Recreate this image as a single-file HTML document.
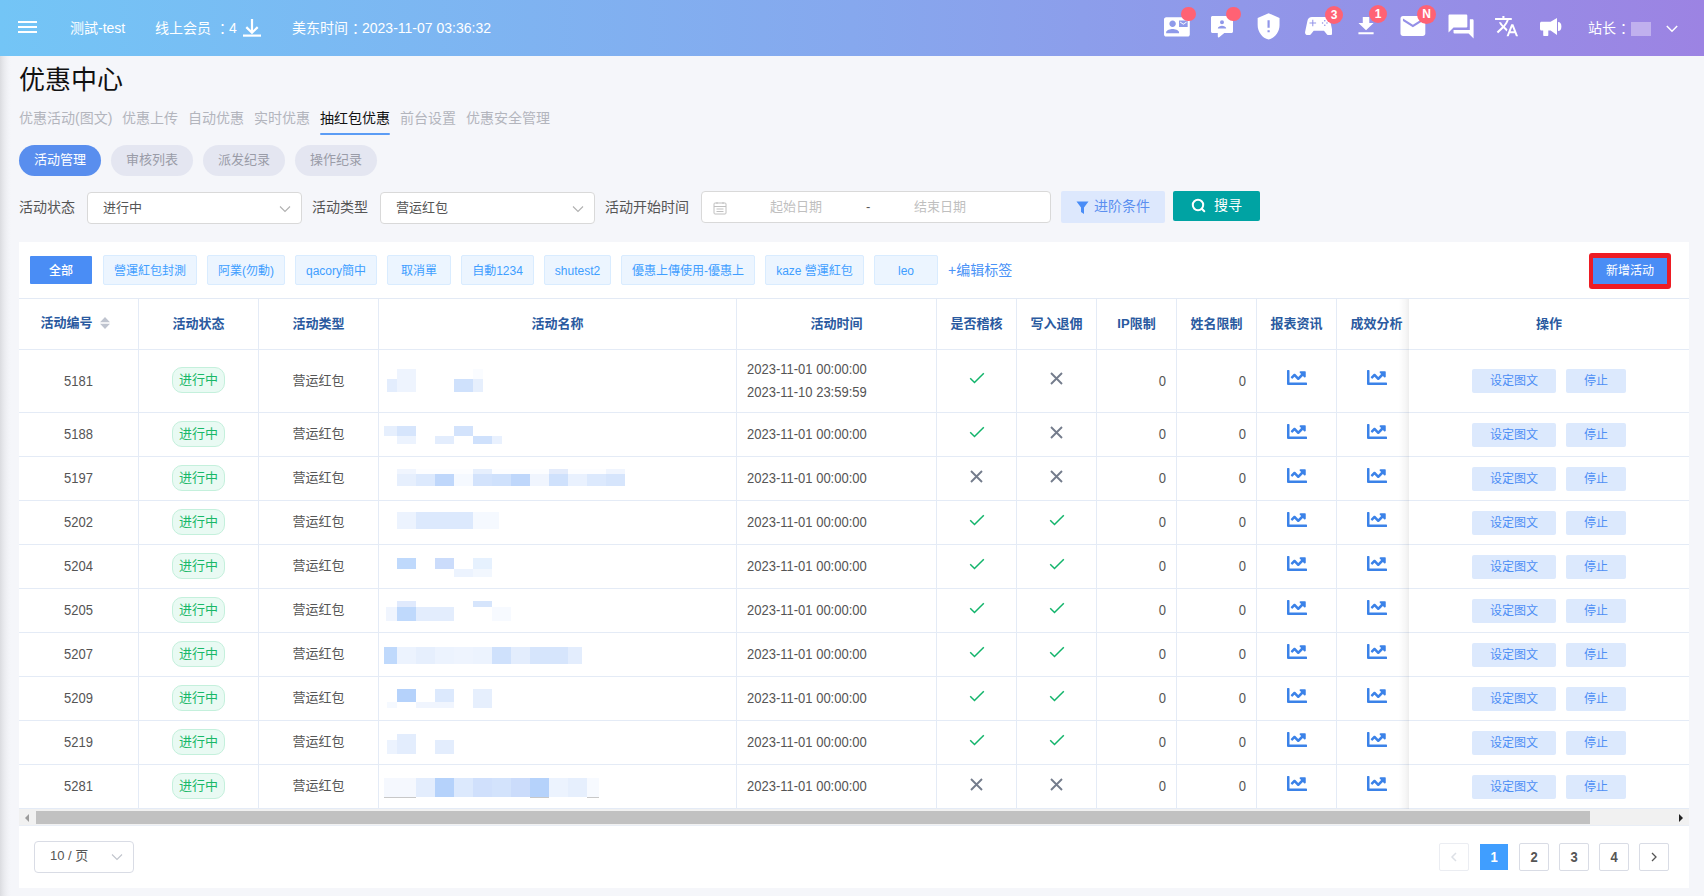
<!DOCTYPE html>
<html lang="zh-CN">
<head>
<meta charset="utf-8">
<title>优惠中心</title>
<style>
*{box-sizing:border-box;margin:0;padding:0}
html,body{width:1704px;height:896px;overflow:hidden}
body{background:#f5f6fa;font-family:"Liberation Sans","Noto Sans CJK SC",sans-serif;font-size:14px;color:#555;position:relative}
.abs{position:absolute}
#hdr{position:absolute;left:0;top:0;width:1704px;height:56px;background:linear-gradient(90deg,#73c5f6 0%,#86a8ee 50%,#9c83e3 100%);color:#fff}
#hdr .t{position:absolute;top:0;height:56px;line-height:56px;font-size:14px;white-space:nowrap;color:#fff}
#lshadow{position:absolute;left:0;top:56px;width:11px;height:840px;background:linear-gradient(90deg,#dbdce0 0%,#e3e4e8 20%,#eaebef 40%,#eff0f4 60%,#f3f4f8 80%,#f5f6fa 100%)}
h1{position:absolute;left:19px;top:62px;font-size:26px;line-height:36px;font-weight:400;color:#111}
.tab{position:absolute;top:108px;height:20px;line-height:20px;font-size:14px;color:#b3b5bd;white-space:nowrap}
.tab.on{color:#111}
.pill{position:absolute;top:145px;width:82px;height:31px;line-height:30px;border-radius:16px;background:#e4e6f1;color:#9a9ca8;text-align:center;font-size:13px}
.pill.on{background:#598eee;color:#fff}
.lbl{position:absolute;top:192px;height:32px;line-height:31px;font-size:14px;color:#555;white-space:nowrap}
.sel{position:absolute;top:192px;height:32px;border:1px solid #d9d9d9;border-radius:4px;background:#fff;line-height:30px;padding-left:15px;font-size:13px;color:#555}
#card{position:absolute;left:19px;top:242px;width:1670px;height:646px;background:#fff}

#tags{position:absolute;left:0;top:0;width:1670px;height:56px}
#tags span{position:absolute;white-space:nowrap}
.all{top:14px;width:62px;height:28px;line-height:30px;background:#4a8df5;color:#fff;font-size:12px;font-weight:500;text-align:center;border-radius:1px}
.tag{top:13px;height:30px;line-height:30px;border:1px solid #d9ecff;background:#ecf5ff;color:#409eff;font-size:12px;text-align:center;border-radius:2px}
.edit{top:13px;height:30px;line-height:30px;color:#4a93f7;font-size:14px}
.redbox{left:1569.700px;top:11.400px;width:82.700px;height:36.100px;background:#ed1c24;border-radius:3px}
.newbtn{left:4.700px;top:5.100px;width:73.200px;height:26px;line-height:27px;background:#4a8df5;color:#fff;font-size:12px;text-align:center}
#tw{position:absolute;left:0;top:56px;width:1390px;height:511px;overflow:hidden;border-top:1px solid #e3eaf5}
#tw table{border-collapse:separate;border-spacing:0;table-layout:fixed;width:1478px}
#tw th,#tw td{border-right:1px solid #e4ebf6;border-bottom:1px solid #e4ebf6;text-align:center;vertical-align:middle;font-size:13px;color:#555;padding:0;white-space:nowrap}
#tw th{height:51px;font-weight:700;color:#2a5aa0;font-size:13px}
#tw td.tm{text-align:left;padding-left:10px;line-height:23px}
#tw td.num{text-align:right;padding-right:10px}
.sortwrap{position:relative;display:inline-block;padding-right:17px;top:-3px;left:-3.500px}
.sort{position:absolute;right:0;top:5px}
.st{display:inline-block;width:53px;height:26px;line-height:23px;border:1px solid #c4f0dc;background:#e9faf3;color:#19b868;border-radius:10px;font-size:13px;position:relative;top:-1px}
.ic{display:inline-block;vertical-align:middle}
.ic.ck{position:relative;top:-4px}
.ic.cx{position:relative;top:-3.400px}
.ic.ch{position:relative;top:-4px}
#fx{position:absolute;left:1390px;top:56px;width:280px;height:511px;background:#fff;border-top:1px solid #e3eaf5}
#fx:before{content:"";position:absolute;left:-11px;top:0;width:11px;height:511px;background:linear-gradient(90deg,rgba(0,0,0,0) 0%,rgba(0,0,0,.012) 30%,rgba(0,0,0,.035) 70%,rgba(0,0,0,.065) 100%)}
.fh{height:51px;line-height:49px;border-bottom:1px solid #e4ebf6;text-align:center;font-weight:700;color:#2a5aa0;font-size:13px}
.fr{position:relative;border-bottom:1px solid #e4ebf6}
.fr span{position:absolute;top:50%;margin-top:-12px;height:24px;line-height:24px;background:#dce9fd;color:#4d8ef5;font-size:12px;text-align:center;border-radius:2px}
.b1{left:63px;width:84px}
.b2{left:157px;width:60px}
#mos i{position:absolute;display:block}
#sb{position:absolute;left:0;top:567px;width:1670px;height:17px;background:#f1f1f1;border-bottom:1px solid #e9eef6}
#sb .thumb{position:absolute;left:17px;top:2px;width:1554px;height:13px;background:#c1c1c1}
#sb .al{position:absolute;left:6px;top:4.500px}
#sb .ar{position:absolute;left:1659.500px;top:4.500px}
#ps{position:absolute;left:15px;top:599px;width:100px;height:32px;border:1px solid #d9dce5;border-radius:4px;font-size:13px;color:#555;line-height:28px;padding-left:15px}
#ps svg{position:absolute;left:76px;top:9px}
#pg{position:absolute;left:0;top:601px}
.pb{position:absolute;top:0;width:30px;height:28px;line-height:26px;border:1px solid #d9dce5;border-radius:2px;text-align:center;font-weight:700;font-size:13px;color:#555;background:#fff}
.pb.on{background:#409eff;color:#fff;border-color:#409eff;width:28px;height:26px;top:1px;line-height:24px;border-radius:0}
.pb.dis{border-color:#ebedf2}
.pb svg{position:relative;top:1px}
.pb b{display:inline-block;position:relative;top:1px;transform:scaleY(1.140);transform-origin:50% 68%;font-weight:700}

.dot{position:absolute;width:14.500px;height:14.500px;border-radius:50%;background:#ff6274}
.bdg{position:absolute;width:18px;height:18px;border-radius:50%;background:#ff6274;color:#fff;font-style:normal;font-weight:700;font-size:12px;line-height:18px;text-align:center}
.jc{position:relative;left:4px}
.cj{position:relative;top:-2px}
#tw th span.h{position:relative;top:-2px}
.sy{display:inline-block;transform:scaleY(1.1);transform-origin:0 11.800px;line-height:15px}
#tw td.tm .sy{display:block;line-height:23px;transform-origin:0 15.800px}
</style>
</head>
<body>
<div id="hdr">

  <svg class="abs" style="left:18px;top:21px" width="19" height="12" viewBox="0 0 19 12"><path d="M0 0h19v2H0zM0 5h19v2H0zM0 10h19v2H0z" fill="#fff"/></svg>
  <svg class="abs" style="left:243px;top:19px" width="18" height="18" viewBox="0 0 18 18"><path d="M9 0v13M3.300 8.100L9 13.800l5.700-5.700" fill="none" stroke="#fff" stroke-width="2.200"/><path d="M0 15.500h18v2.200H0z" fill="#fff"/></svg>
  <svg class="abs" style="left:1164.100px;top:13.800px" width="25.800" height="25.800" viewBox="0 0 24 24"><path fill="#fff" d="M21 8V7l-3 2-3-2v1l3 2 3-2zm1-5H2C.9 3 0 3.900 0 5v14c0 1.100.9 2 2 2h20c1.100 0 1.990-.9 1.990-2L24 5c0-1.100-.9-2-2-2zM8 6c1.660 0 3 1.340 3 3s-1.340 3-3 3-3-1.340-3-3 1.340-3 3-3zm6 12H2v-1c0-2 4-3.100 6-3.100s6 1.100 6 3.100v1zm8-6h-8V6h8v6z"/></svg>
  <i class="dot" style="left:1181px;top:6.700px"></i>
  <svg class="abs" style="left:1211px;top:16px" width="22" height="21.500" viewBox="0 0 22 21.500"><path fill="#fff" d="M1.500 0h19c.8 0 1.500.7 1.500 1.500v14c0 .8-.7 1.500-1.500 1.500H13.300L8.200 21.300c-.6.500-1.400.1-1.400-.7V17H1.500C.7 17 0 16.300 0 15.500v-14C0 .7.700 0 1.500 0zM11 4.200a2 2 0 100 4 2 2 0 000-4zM6.800 12.600h8.400c0-1.900-2.600-2.800-4.200-2.800s-4.200.9-4.200 2.800z"/></svg>
  <i class="dot" style="left:1226px;top:6.700px"></i>
  <svg class="abs" style="left:1253.750px;top:11.500px" width="29.200" height="28.700" viewBox="0 0 24 24" preserveAspectRatio="none"><path fill="#fff" d="M12 1L3 5v6c0 5.550 3.840 10.740 9 12 5.160-1.260 9-6.450 9-12V5l-9-4zm.9 16h-1.800v-1.800h1.800V17zm0-3.800h-1.800V7h1.800v6.200z"/></svg>
  <svg class="abs" style="left:1304.700px;top:16.900px" width="27.700" height="18.300" viewBox="0 0 27.700 18.300"><path fill="#fff" fill-rule="evenodd" d="M7 0H20.700C23 0 24.900 1.600 25.300 3.900L27.600 15C27.900 16.800 26.600 18.300 24.900 18.300H24C23.200 18.300 22.500 18 22 17.400L19 13.700H8.700L5.700 17.400C5.200 18 4.500 18.300 3.700 18.300H2.800C1.100 18.300-.2 16.800.1 15L2.400 3.900C2.800 1.600 4.700 0 7 0ZM7.300 2.700V5.500H4.500V6.500H7.300V9.300H8.300V6.500H11.100V5.500H8.300V2.700ZM19.800 3a.8.800 0 100 1.600.8.800 0 000-1.600ZM19.800 7.400a.8.800 0 100 1.600.8.800 0 000-1.600ZM17.600 5.200a.8.800 0 100 1.600.8.800 0 000-1.600ZM22 5.200a.8.800 0 100 1.600.8.800 0 000-1.600Z"/></svg>
  <i class="bdg" style="left:1325px;top:6px">3</i>
  <svg class="abs" style="left:1353.400px;top:13.860px" width="26.060" height="24.300" viewBox="0 0 24 24" preserveAspectRatio="none"><path fill="#fff" d="M19 9h-4V3H9v6H5l7 7 7-7zM5 18v2h14v-2H5z"/></svg>
  <i class="bdg" style="left:1369px;top:5px">1</i>
  <svg class="abs" style="left:1397.500px;top:11px" width="29.800" height="30" viewBox="0 0 24 24"><path fill="#fff" d="M20 4H4c-1.100 0-1.990.9-1.990 2L2 18c0 1.100.9 2 2 2h16c1.100 0 2-.9 2-2V6c0-1.100-.9-2-2-2zm0 4l-8 5-8-5V6l8 5 8-5v2z"/></svg>
  <i class="bdg" style="left:1417px;top:5.300px;width:19px;height:19px;line-height:19px">N</i>
  <svg class="abs" style="left:1445.900px;top:12px" width="30.100" height="28.800" viewBox="0 0 24 24" preserveAspectRatio="none"><path fill="#fff" d="M21 6h-2v9H6v2c0 .55.450 1 1 1h11l4 4V7c0-.55-.45-1-1-1zm-4 6V3c0-.55-.45-1-1-1H3c-.55 0-1 .45-1 1v14l4-4h10c.55 0 1-.45 1-1z"/></svg>
  <svg class="abs" style="left:1493.900px;top:13.900px" width="25.100" height="24.400" viewBox="0 0 24 24" preserveAspectRatio="none"><path fill="#fff" d="M12.870 15.070l-2.540-2.510.03-.03c1.740-1.940 2.980-4.170 3.710-6.530H17V4h-7V2H8v2H1v1.990h11.170C11.500 7.920 10.440 9.750 9 11.350 8.070 10.320 7.300 9.190 6.690 8h-2c.73 1.630 1.730 3.170 2.980 4.560l-5.090 5.020L4 19l5-5 3.110 3.110.76-2.040zM18.500 10h-2L12 22h2l1.120-3h4.750L21 22h2l-4.500-12zm-2.620 7l1.620-4.330L19.120 17h-3.240z"/></svg>
  <svg class="abs" style="left:1540px;top:18px" width="22" height="18" viewBox="0 0 22 18"><path fill="#fff" d="M1.500 3.700h9.100L17 0v17l-6.400-4.600H8.300V17c0 .6-.4 1-1 1H4.200c-.6 0-1-.4-1-1v-4.600H1.500C.7 12.400 0 11.700 0 10.900V5.200c0-.8.700-1.500 1.500-1.500zM18 4a3.400 4.500 0 010 9z"/></svg>
  <i class="abs" style="left:1631px;top:22px;width:20px;height:14px;background:#c0b0ee"></i>
  <svg class="abs" style="left:1666px;top:24.500px" width="12" height="8" viewBox="0 0 12 8"><path d="M.8 1l5.200 5.200L11.200 1" fill="none" stroke="#fff" stroke-width="1.500"/></svg>
  <span class="t" style="left:70px">测試-test</span>
  <span class="t" style="left:155px">线上会员 <span class="jc">：</span>4</span>
  <span class="t" style="left:292px">美东时间<span class="jc">：</span>2023-11-07 03:36:32</span>
  <span class="t" style="left:1588px">站长<span class="jc">：</span></span>
</div>
<div id="lshadow"></div>
<h1>优惠中心</h1>

<span class="tab" style="left:19px">优惠活动(图文)</span>
<span class="tab" style="left:122px">优惠上传</span>
<span class="tab" style="left:188px">自动优惠</span>
<span class="tab" style="left:254px">实时优惠</span>
<span class="tab on" style="left:320px">抽红包优惠</span>
<span class="tab" style="left:400px">前台设置</span>
<span class="tab" style="left:466px">优惠安全管理</span>
<div class="abs" style="left:320px;top:133px;width:70px;height:2px;background:#5b9cf5;border-radius:1px"></div>
<div class="pill on" style="left:19px">活动管理</div>
<div class="pill" style="left:111px">审核列表</div>
<div class="pill" style="left:203px">派发纪录</div>
<div class="pill" style="left:295px">操作纪录</div>
<span class="lbl" style="left:19px">活动状态</span>
<div class="sel" style="left:87px;width:215px">进行中<svg class="abs" style="right:10px;top:10px" width="12" height="12" viewBox="0 0 12 12"><path d="M1 3.5l5 5 5-5" fill="none" stroke="#b0b0b0" stroke-width="1.1"/></svg></div>
<span class="lbl" style="left:312px">活动类型</span>
<div class="sel" style="left:380px;width:215px">营运红包<svg class="abs" style="right:10px;top:10px" width="12" height="12" viewBox="0 0 12 12"><path d="M1 3.5l5 5 5-5" fill="none" stroke="#b0b0b0" stroke-width="1.1"/></svg></div>
<span class="lbl" style="left:605px">活动开始时间</span>
<div class="sel" id="range" style="left:701px;top:191px;width:350px;padding:0">
  <svg class="abs" style="left:11px;top:9px" width="14" height="14" viewBox="0 0 14 14"><rect x="1" y="2" width="12" height="11" rx="1" fill="none" stroke="#c0c0c0" stroke-width="1"/><path d="M1 5.5h12M4 1v2M10 1v2M3.5 8h7M3.500 10.500h7" stroke="#c0c0c0" stroke-width="1" fill="none"/></svg>
  <span class="abs" style="left:68px;top:0;color:#bfbfbf;font-size:13px">起始日期</span>
  <span class="abs" style="left:164px;top:0;color:#555;font-size:13px">-</span>
  <span class="abs" style="left:212px;top:0;color:#bfbfbf;font-size:13px">结束日期</span>
</div>
<div class="abs" id="adv" style="left:1061px;top:191px;width:104px;height:32px;background:#dde8fd;border-radius:2px;color:#5b8ff0;font-size:14px;line-height:31px;padding-left:33px">进阶条件
  <svg class="abs" style="left:15px;top:10px" width="13" height="14" viewBox="0 0 13 14"><path d="M0.500 0.500h12L8 6.500V13l-3-2V6.500z" fill="#4a8df7"/></svg>
</div>
<div class="abs" id="srch" style="left:1173px;top:191px;width:87px;height:30px;background:#00a3a3;border-radius:2px;color:#fff;font-size:14px;line-height:29px;padding-left:41px">搜寻
  <svg class="abs" style="left:18px;top:7px" width="15" height="15" viewBox="0 0 15 15"><circle cx="7" cy="7" r="5.200" fill="none" stroke="#fff" stroke-width="2"/><path d="M10.800 10.800l2.500 2.500" stroke="#fff" stroke-width="2" stroke-linecap="round"/></svg>
</div>
<div id="card"><!--CARD-->
<div id="tags">
<span class="all" style="left:11px">全部</span>
<span class="tag" style="left:84px;width:94px">營運紅包封測</span>
<span class="tag" style="left:188px;width:78px">阿業(勿動)</span>
<span class="tag" style="left:276px;width:82px">qacory簡中</span>
<span class="tag" style="left:368px;width:64px">取消單</span>
<span class="tag" style="left:442px;width:73px">自動1234</span>
<span class="tag" style="left:525px;width:67px">shutest2</span>
<span class="tag" style="left:602px;width:134px">優惠上傳使用-優惠上</span>
<span class="tag" style="left:746px;width:99px">kaze 營運紅包</span>
<span class="tag" style="left:855px;width:64px">leo</span>
<span class="edit" style="left:929px">+编辑标签</span>
<span class="redbox"><span class="newbtn">新增活动</span></span>
</div>
<div id="tw"><table><colgroup>
<col style="width:120px">
<col style="width:120px">
<col style="width:120px">
<col style="width:358px">
<col style="width:200px">
<col style="width:80px">
<col style="width:80px">
<col style="width:80px">
<col style="width:80px">
<col style="width:80px">
<col style="width:80px">
<col style="width:80px">
</colgroup><thead><tr>
<th><span class="sortwrap">活动编号<svg class="sort" width="10" height="12" viewBox="0 0 10 12"><path d="M5 0l5 5.300H0zM5 12L0 6.700h10z" fill="#bfc4cf"/></svg></span></th>
<th><span class="h">活动状态</span></th>
<th><span class="h">活动类型</span></th>
<th><span class="h">活动名称</span></th>
<th><span class="h">活动时间</span></th>
<th><span class="h">是否稽核</span></th>
<th><span class="h">写入退佣</span></th>
<th><span class="h">IP限制</span></th>
<th><span class="h">姓名限制</span></th>
<th><span class="h">报表资讯</span></th>
<th><span class="h">成效分析</span></th>
<th><span class="h"></span></th>
</tr></thead><tbody>
<tr style="height:63px"><td><span class="sy">5181</span></td><td><span class="st">进行中</span></td><td><span class="cj">营运红包</span></td><td></td><td class="tm"><span class="sy">2023-11-01 00:00:00</span><span class="sy">2023-11-10 23:59:59</span></td><td><svg class="ic ck" width="16" height="12" viewBox="0 0 16 12"><path d="M1.200 6.300l4.300 4.200L14.800 1.300" fill="none" stroke="#12b46b" stroke-width="1.500"/></svg></td><td><svg class="ic cx" width="13" height="13" viewBox="0 0 13 13"><path d="M1 1l11 11M12 1L1 12" fill="none" stroke="#747c8c" stroke-width="1.900"/></svg></td><td class="num"><span class="sy">0</span></td><td class="num"><span class="sy">0</span></td><td><svg class="ic ch" width="20" height="15" viewBox="0 0 512 384"><path fill="#3b82e8" d="M496 320H64V16c0-8.840-7.160-16-16-16H16C7.160 0 0 7.160 0 16v336c0 17.670 14.330 32 32 32h464c8.840 0 16-7.160 16-16v-32c0-8.840-7.160-16-16-16zM464 32H345.940c-21.380 0-32.090 25.850-16.970 40.970l32.400 32.400L288 178.750l-73.370-73.370c-12.500-12.500-32.760-12.500-45.250 0l-68.690 68.690c-6.250 6.250-6.250 16.380 0 22.630l22.620 22.620c6.250 6.250 16.380 6.250 22.630 0L192 173.250l73.370 73.370c12.500 12.500 32.760 12.500 45.250 0l96-96 32.400 32.400c15.120 15.120 40.970 4.410 40.970-16.970V48c.010-8.840-7.150-16-15.990-16z"/></svg></td><td><svg class="ic ch" width="20" height="15" viewBox="0 0 512 384"><path fill="#3b82e8" d="M496 320H64V16c0-8.840-7.160-16-16-16H16C7.160 0 0 7.160 0 16v336c0 17.670 14.330 32 32 32h464c8.840 0 16-7.160 16-16v-32c0-8.840-7.160-16-16-16zM464 32H345.940c-21.380 0-32.090 25.850-16.970 40.970l32.400 32.400L288 178.750l-73.370-73.370c-12.500-12.500-32.760-12.500-45.250 0l-68.690 68.690c-6.250 6.250-6.250 16.380 0 22.630l22.620 22.620c6.250 6.250 16.380 6.250 22.630 0L192 173.250l73.370 73.370c12.500 12.500 32.760 12.500 45.250 0l96-96 32.400 32.400c15.120 15.120 40.970 4.410 40.970-16.970V48c.010-8.840-7.150-16-15.990-16z"/></svg></td><td></td></tr>
<tr style="height:44px"><td><span class="sy">5188</span></td><td><span class="st">进行中</span></td><td><span class="cj">营运红包</span></td><td></td><td class="tm"><span class="sy">2023-11-01 00:00:00</span></td><td><svg class="ic ck" width="16" height="12" viewBox="0 0 16 12"><path d="M1.200 6.300l4.300 4.200L14.800 1.300" fill="none" stroke="#12b46b" stroke-width="1.500"/></svg></td><td><svg class="ic cx" width="13" height="13" viewBox="0 0 13 13"><path d="M1 1l11 11M12 1L1 12" fill="none" stroke="#747c8c" stroke-width="1.900"/></svg></td><td class="num"><span class="sy">0</span></td><td class="num"><span class="sy">0</span></td><td><svg class="ic ch" width="20" height="15" viewBox="0 0 512 384"><path fill="#3b82e8" d="M496 320H64V16c0-8.840-7.160-16-16-16H16C7.160 0 0 7.160 0 16v336c0 17.670 14.330 32 32 32h464c8.840 0 16-7.160 16-16v-32c0-8.840-7.160-16-16-16zM464 32H345.940c-21.380 0-32.090 25.850-16.970 40.970l32.400 32.400L288 178.750l-73.370-73.370c-12.500-12.500-32.760-12.500-45.250 0l-68.690 68.690c-6.250 6.250-6.250 16.380 0 22.630l22.620 22.620c6.250 6.250 16.380 6.250 22.630 0L192 173.250l73.370 73.370c12.500 12.500 32.760 12.500 45.250 0l96-96 32.400 32.400c15.120 15.120 40.970 4.410 40.970-16.970V48c.010-8.840-7.150-16-15.990-16z"/></svg></td><td><svg class="ic ch" width="20" height="15" viewBox="0 0 512 384"><path fill="#3b82e8" d="M496 320H64V16c0-8.840-7.160-16-16-16H16C7.160 0 0 7.160 0 16v336c0 17.670 14.330 32 32 32h464c8.840 0 16-7.160 16-16v-32c0-8.840-7.160-16-16-16zM464 32H345.940c-21.380 0-32.090 25.850-16.970 40.970l32.400 32.400L288 178.750l-73.370-73.370c-12.500-12.500-32.760-12.500-45.250 0l-68.690 68.690c-6.250 6.250-6.250 16.380 0 22.630l22.620 22.620c6.250 6.250 16.380 6.250 22.630 0L192 173.250l73.370 73.370c12.500 12.500 32.760 12.500 45.250 0l96-96 32.400 32.400c15.120 15.120 40.970 4.410 40.970-16.970V48c.010-8.840-7.150-16-15.990-16z"/></svg></td><td></td></tr>
<tr style="height:44px"><td><span class="sy">5197</span></td><td><span class="st">进行中</span></td><td><span class="cj">营运红包</span></td><td></td><td class="tm"><span class="sy">2023-11-01 00:00:00</span></td><td><svg class="ic cx" width="13" height="13" viewBox="0 0 13 13"><path d="M1 1l11 11M12 1L1 12" fill="none" stroke="#747c8c" stroke-width="1.900"/></svg></td><td><svg class="ic cx" width="13" height="13" viewBox="0 0 13 13"><path d="M1 1l11 11M12 1L1 12" fill="none" stroke="#747c8c" stroke-width="1.900"/></svg></td><td class="num"><span class="sy">0</span></td><td class="num"><span class="sy">0</span></td><td><svg class="ic ch" width="20" height="15" viewBox="0 0 512 384"><path fill="#3b82e8" d="M496 320H64V16c0-8.840-7.160-16-16-16H16C7.160 0 0 7.160 0 16v336c0 17.670 14.330 32 32 32h464c8.840 0 16-7.160 16-16v-32c0-8.840-7.160-16-16-16zM464 32H345.940c-21.380 0-32.090 25.850-16.970 40.970l32.400 32.400L288 178.750l-73.370-73.370c-12.500-12.500-32.760-12.500-45.250 0l-68.690 68.690c-6.250 6.250-6.250 16.380 0 22.630l22.620 22.620c6.250 6.250 16.380 6.250 22.630 0L192 173.250l73.370 73.370c12.500 12.500 32.760 12.500 45.250 0l96-96 32.400 32.400c15.120 15.120 40.970 4.410 40.970-16.970V48c.010-8.840-7.150-16-15.990-16z"/></svg></td><td><svg class="ic ch" width="20" height="15" viewBox="0 0 512 384"><path fill="#3b82e8" d="M496 320H64V16c0-8.840-7.160-16-16-16H16C7.160 0 0 7.160 0 16v336c0 17.670 14.330 32 32 32h464c8.840 0 16-7.160 16-16v-32c0-8.840-7.160-16-16-16zM464 32H345.940c-21.380 0-32.090 25.850-16.970 40.970l32.400 32.400L288 178.750l-73.370-73.370c-12.500-12.500-32.760-12.500-45.250 0l-68.690 68.690c-6.250 6.250-6.250 16.380 0 22.630l22.620 22.620c6.250 6.250 16.380 6.250 22.630 0L192 173.250l73.370 73.370c12.500 12.500 32.760 12.500 45.250 0l96-96 32.400 32.400c15.120 15.120 40.970 4.410 40.970-16.970V48c.010-8.840-7.150-16-15.990-16z"/></svg></td><td></td></tr>
<tr style="height:44px"><td><span class="sy">5202</span></td><td><span class="st">进行中</span></td><td><span class="cj">营运红包</span></td><td></td><td class="tm"><span class="sy">2023-11-01 00:00:00</span></td><td><svg class="ic ck" width="16" height="12" viewBox="0 0 16 12"><path d="M1.200 6.300l4.300 4.200L14.800 1.300" fill="none" stroke="#12b46b" stroke-width="1.500"/></svg></td><td><svg class="ic ck" width="16" height="12" viewBox="0 0 16 12"><path d="M1.200 6.300l4.300 4.200L14.800 1.300" fill="none" stroke="#12b46b" stroke-width="1.500"/></svg></td><td class="num"><span class="sy">0</span></td><td class="num"><span class="sy">0</span></td><td><svg class="ic ch" width="20" height="15" viewBox="0 0 512 384"><path fill="#3b82e8" d="M496 320H64V16c0-8.840-7.160-16-16-16H16C7.160 0 0 7.160 0 16v336c0 17.670 14.330 32 32 32h464c8.840 0 16-7.160 16-16v-32c0-8.840-7.160-16-16-16zM464 32H345.940c-21.380 0-32.090 25.850-16.970 40.970l32.400 32.400L288 178.750l-73.370-73.370c-12.500-12.500-32.760-12.500-45.250 0l-68.690 68.690c-6.250 6.250-6.250 16.380 0 22.630l22.620 22.620c6.250 6.250 16.380 6.250 22.630 0L192 173.250l73.370 73.370c12.500 12.500 32.760 12.500 45.250 0l96-96 32.400 32.400c15.120 15.120 40.970 4.410 40.970-16.970V48c.010-8.840-7.150-16-15.990-16z"/></svg></td><td><svg class="ic ch" width="20" height="15" viewBox="0 0 512 384"><path fill="#3b82e8" d="M496 320H64V16c0-8.840-7.160-16-16-16H16C7.160 0 0 7.160 0 16v336c0 17.670 14.330 32 32 32h464c8.840 0 16-7.160 16-16v-32c0-8.840-7.160-16-16-16zM464 32H345.940c-21.380 0-32.090 25.850-16.970 40.970l32.400 32.400L288 178.750l-73.370-73.370c-12.500-12.500-32.760-12.500-45.250 0l-68.690 68.690c-6.250 6.250-6.250 16.380 0 22.630l22.620 22.620c6.250 6.250 16.380 6.250 22.630 0L192 173.250l73.370 73.370c12.500 12.500 32.760 12.500 45.250 0l96-96 32.400 32.400c15.120 15.120 40.970 4.410 40.970-16.970V48c.010-8.840-7.150-16-15.990-16z"/></svg></td><td></td></tr>
<tr style="height:44px"><td><span class="sy">5204</span></td><td><span class="st">进行中</span></td><td><span class="cj">营运红包</span></td><td></td><td class="tm"><span class="sy">2023-11-01 00:00:00</span></td><td><svg class="ic ck" width="16" height="12" viewBox="0 0 16 12"><path d="M1.200 6.300l4.300 4.200L14.800 1.300" fill="none" stroke="#12b46b" stroke-width="1.500"/></svg></td><td><svg class="ic ck" width="16" height="12" viewBox="0 0 16 12"><path d="M1.200 6.300l4.300 4.200L14.800 1.300" fill="none" stroke="#12b46b" stroke-width="1.500"/></svg></td><td class="num"><span class="sy">0</span></td><td class="num"><span class="sy">0</span></td><td><svg class="ic ch" width="20" height="15" viewBox="0 0 512 384"><path fill="#3b82e8" d="M496 320H64V16c0-8.840-7.160-16-16-16H16C7.160 0 0 7.160 0 16v336c0 17.670 14.330 32 32 32h464c8.840 0 16-7.160 16-16v-32c0-8.840-7.160-16-16-16zM464 32H345.940c-21.380 0-32.090 25.850-16.970 40.970l32.400 32.400L288 178.750l-73.370-73.370c-12.500-12.500-32.760-12.500-45.250 0l-68.690 68.690c-6.250 6.250-6.250 16.380 0 22.630l22.620 22.620c6.250 6.250 16.380 6.250 22.630 0L192 173.250l73.370 73.370c12.500 12.500 32.760 12.500 45.250 0l96-96 32.400 32.400c15.120 15.120 40.970 4.410 40.970-16.970V48c.010-8.840-7.150-16-15.990-16z"/></svg></td><td><svg class="ic ch" width="20" height="15" viewBox="0 0 512 384"><path fill="#3b82e8" d="M496 320H64V16c0-8.840-7.160-16-16-16H16C7.160 0 0 7.160 0 16v336c0 17.670 14.330 32 32 32h464c8.840 0 16-7.160 16-16v-32c0-8.840-7.160-16-16-16zM464 32H345.940c-21.380 0-32.090 25.850-16.970 40.970l32.400 32.400L288 178.750l-73.370-73.370c-12.500-12.500-32.760-12.500-45.250 0l-68.690 68.690c-6.250 6.250-6.250 16.380 0 22.630l22.620 22.620c6.250 6.250 16.380 6.250 22.630 0L192 173.250l73.370 73.370c12.500 12.500 32.760 12.500 45.250 0l96-96 32.400 32.400c15.120 15.120 40.970 4.410 40.970-16.970V48c.010-8.840-7.150-16-15.990-16z"/></svg></td><td></td></tr>
<tr style="height:44px"><td><span class="sy">5205</span></td><td><span class="st">进行中</span></td><td><span class="cj">营运红包</span></td><td></td><td class="tm"><span class="sy">2023-11-01 00:00:00</span></td><td><svg class="ic ck" width="16" height="12" viewBox="0 0 16 12"><path d="M1.200 6.300l4.300 4.200L14.800 1.300" fill="none" stroke="#12b46b" stroke-width="1.500"/></svg></td><td><svg class="ic ck" width="16" height="12" viewBox="0 0 16 12"><path d="M1.200 6.300l4.300 4.200L14.800 1.300" fill="none" stroke="#12b46b" stroke-width="1.500"/></svg></td><td class="num"><span class="sy">0</span></td><td class="num"><span class="sy">0</span></td><td><svg class="ic ch" width="20" height="15" viewBox="0 0 512 384"><path fill="#3b82e8" d="M496 320H64V16c0-8.840-7.160-16-16-16H16C7.160 0 0 7.160 0 16v336c0 17.670 14.330 32 32 32h464c8.840 0 16-7.160 16-16v-32c0-8.840-7.160-16-16-16zM464 32H345.940c-21.380 0-32.090 25.850-16.970 40.970l32.400 32.400L288 178.750l-73.370-73.370c-12.500-12.500-32.760-12.500-45.250 0l-68.690 68.690c-6.250 6.250-6.250 16.380 0 22.630l22.620 22.620c6.250 6.250 16.380 6.250 22.630 0L192 173.250l73.370 73.370c12.500 12.500 32.760 12.500 45.250 0l96-96 32.400 32.400c15.120 15.120 40.970 4.410 40.970-16.970V48c.010-8.840-7.150-16-15.990-16z"/></svg></td><td><svg class="ic ch" width="20" height="15" viewBox="0 0 512 384"><path fill="#3b82e8" d="M496 320H64V16c0-8.840-7.160-16-16-16H16C7.160 0 0 7.160 0 16v336c0 17.670 14.330 32 32 32h464c8.840 0 16-7.160 16-16v-32c0-8.840-7.160-16-16-16zM464 32H345.940c-21.380 0-32.090 25.850-16.970 40.970l32.400 32.400L288 178.750l-73.370-73.370c-12.500-12.500-32.760-12.500-45.250 0l-68.690 68.690c-6.250 6.250-6.250 16.380 0 22.630l22.620 22.620c6.250 6.250 16.380 6.250 22.630 0L192 173.250l73.370 73.370c12.500 12.500 32.760 12.500 45.250 0l96-96 32.400 32.400c15.120 15.120 40.970 4.410 40.970-16.970V48c.010-8.840-7.150-16-15.990-16z"/></svg></td><td></td></tr>
<tr style="height:44px"><td><span class="sy">5207</span></td><td><span class="st">进行中</span></td><td><span class="cj">营运红包</span></td><td></td><td class="tm"><span class="sy">2023-11-01 00:00:00</span></td><td><svg class="ic ck" width="16" height="12" viewBox="0 0 16 12"><path d="M1.200 6.300l4.300 4.200L14.800 1.300" fill="none" stroke="#12b46b" stroke-width="1.500"/></svg></td><td><svg class="ic ck" width="16" height="12" viewBox="0 0 16 12"><path d="M1.200 6.300l4.300 4.200L14.800 1.300" fill="none" stroke="#12b46b" stroke-width="1.500"/></svg></td><td class="num"><span class="sy">0</span></td><td class="num"><span class="sy">0</span></td><td><svg class="ic ch" width="20" height="15" viewBox="0 0 512 384"><path fill="#3b82e8" d="M496 320H64V16c0-8.840-7.160-16-16-16H16C7.160 0 0 7.160 0 16v336c0 17.670 14.330 32 32 32h464c8.840 0 16-7.160 16-16v-32c0-8.840-7.160-16-16-16zM464 32H345.940c-21.380 0-32.090 25.850-16.970 40.970l32.400 32.400L288 178.750l-73.370-73.370c-12.500-12.500-32.760-12.500-45.250 0l-68.690 68.690c-6.250 6.250-6.250 16.380 0 22.630l22.620 22.620c6.250 6.250 16.380 6.250 22.630 0L192 173.250l73.370 73.370c12.500 12.500 32.760 12.500 45.250 0l96-96 32.400 32.400c15.120 15.120 40.970 4.410 40.970-16.970V48c.010-8.840-7.150-16-15.990-16z"/></svg></td><td><svg class="ic ch" width="20" height="15" viewBox="0 0 512 384"><path fill="#3b82e8" d="M496 320H64V16c0-8.840-7.160-16-16-16H16C7.160 0 0 7.160 0 16v336c0 17.670 14.330 32 32 32h464c8.840 0 16-7.160 16-16v-32c0-8.840-7.160-16-16-16zM464 32H345.940c-21.380 0-32.090 25.850-16.970 40.970l32.400 32.400L288 178.750l-73.370-73.370c-12.500-12.500-32.760-12.500-45.250 0l-68.690 68.690c-6.250 6.250-6.250 16.380 0 22.630l22.620 22.620c6.250 6.250 16.380 6.250 22.630 0L192 173.250l73.370 73.370c12.500 12.500 32.760 12.500 45.250 0l96-96 32.400 32.400c15.120 15.120 40.970 4.410 40.970-16.970V48c.010-8.840-7.150-16-15.990-16z"/></svg></td><td></td></tr>
<tr style="height:44px"><td><span class="sy">5209</span></td><td><span class="st">进行中</span></td><td><span class="cj">营运红包</span></td><td></td><td class="tm"><span class="sy">2023-11-01 00:00:00</span></td><td><svg class="ic ck" width="16" height="12" viewBox="0 0 16 12"><path d="M1.200 6.300l4.300 4.200L14.800 1.300" fill="none" stroke="#12b46b" stroke-width="1.500"/></svg></td><td><svg class="ic ck" width="16" height="12" viewBox="0 0 16 12"><path d="M1.200 6.300l4.300 4.200L14.800 1.300" fill="none" stroke="#12b46b" stroke-width="1.500"/></svg></td><td class="num"><span class="sy">0</span></td><td class="num"><span class="sy">0</span></td><td><svg class="ic ch" width="20" height="15" viewBox="0 0 512 384"><path fill="#3b82e8" d="M496 320H64V16c0-8.840-7.160-16-16-16H16C7.160 0 0 7.160 0 16v336c0 17.670 14.330 32 32 32h464c8.840 0 16-7.160 16-16v-32c0-8.840-7.160-16-16-16zM464 32H345.940c-21.380 0-32.090 25.850-16.970 40.970l32.400 32.400L288 178.750l-73.370-73.370c-12.500-12.500-32.760-12.500-45.250 0l-68.690 68.690c-6.250 6.250-6.250 16.380 0 22.630l22.620 22.620c6.250 6.250 16.380 6.250 22.630 0L192 173.250l73.370 73.370c12.500 12.500 32.760 12.500 45.250 0l96-96 32.400 32.400c15.120 15.120 40.970 4.410 40.970-16.970V48c.010-8.840-7.150-16-15.990-16z"/></svg></td><td><svg class="ic ch" width="20" height="15" viewBox="0 0 512 384"><path fill="#3b82e8" d="M496 320H64V16c0-8.840-7.160-16-16-16H16C7.160 0 0 7.160 0 16v336c0 17.670 14.330 32 32 32h464c8.840 0 16-7.160 16-16v-32c0-8.840-7.160-16-16-16zM464 32H345.940c-21.380 0-32.090 25.850-16.970 40.970l32.400 32.400L288 178.750l-73.370-73.370c-12.500-12.500-32.760-12.500-45.250 0l-68.690 68.690c-6.250 6.250-6.250 16.380 0 22.630l22.620 22.620c6.250 6.250 16.380 6.250 22.630 0L192 173.250l73.370 73.370c12.500 12.500 32.760 12.500 45.250 0l96-96 32.400 32.400c15.120 15.120 40.970 4.410 40.970-16.970V48c.010-8.840-7.150-16-15.990-16z"/></svg></td><td></td></tr>
<tr style="height:44px"><td><span class="sy">5219</span></td><td><span class="st">进行中</span></td><td><span class="cj">营运红包</span></td><td></td><td class="tm"><span class="sy">2023-11-01 00:00:00</span></td><td><svg class="ic ck" width="16" height="12" viewBox="0 0 16 12"><path d="M1.200 6.300l4.300 4.200L14.800 1.300" fill="none" stroke="#12b46b" stroke-width="1.500"/></svg></td><td><svg class="ic ck" width="16" height="12" viewBox="0 0 16 12"><path d="M1.200 6.300l4.300 4.200L14.800 1.300" fill="none" stroke="#12b46b" stroke-width="1.500"/></svg></td><td class="num"><span class="sy">0</span></td><td class="num"><span class="sy">0</span></td><td><svg class="ic ch" width="20" height="15" viewBox="0 0 512 384"><path fill="#3b82e8" d="M496 320H64V16c0-8.840-7.160-16-16-16H16C7.160 0 0 7.160 0 16v336c0 17.670 14.330 32 32 32h464c8.840 0 16-7.160 16-16v-32c0-8.840-7.160-16-16-16zM464 32H345.940c-21.380 0-32.090 25.850-16.970 40.970l32.400 32.400L288 178.750l-73.370-73.370c-12.500-12.500-32.760-12.500-45.250 0l-68.690 68.690c-6.250 6.250-6.250 16.380 0 22.630l22.620 22.620c6.250 6.250 16.380 6.250 22.630 0L192 173.250l73.370 73.370c12.500 12.500 32.760 12.500 45.250 0l96-96 32.400 32.400c15.120 15.120 40.970 4.410 40.970-16.970V48c.010-8.840-7.150-16-15.990-16z"/></svg></td><td><svg class="ic ch" width="20" height="15" viewBox="0 0 512 384"><path fill="#3b82e8" d="M496 320H64V16c0-8.840-7.160-16-16-16H16C7.160 0 0 7.160 0 16v336c0 17.670 14.330 32 32 32h464c8.840 0 16-7.160 16-16v-32c0-8.840-7.160-16-16-16zM464 32H345.940c-21.380 0-32.090 25.850-16.970 40.970l32.400 32.400L288 178.750l-73.370-73.370c-12.500-12.500-32.760-12.500-45.250 0l-68.690 68.690c-6.250 6.250-6.250 16.380 0 22.630l22.620 22.620c6.250 6.250 16.380 6.250 22.630 0L192 173.250l73.370 73.370c12.500 12.500 32.760 12.500 45.250 0l96-96 32.400 32.400c15.120 15.120 40.970 4.410 40.970-16.970V48c.010-8.840-7.150-16-15.990-16z"/></svg></td><td></td></tr>
<tr style="height:44px"><td><span class="sy">5281</span></td><td><span class="st">进行中</span></td><td><span class="cj">营运红包</span></td><td></td><td class="tm"><span class="sy">2023-11-01 00:00:00</span></td><td><svg class="ic cx" width="13" height="13" viewBox="0 0 13 13"><path d="M1 1l11 11M12 1L1 12" fill="none" stroke="#747c8c" stroke-width="1.900"/></svg></td><td><svg class="ic cx" width="13" height="13" viewBox="0 0 13 13"><path d="M1 1l11 11M12 1L1 12" fill="none" stroke="#747c8c" stroke-width="1.900"/></svg></td><td class="num"><span class="sy">0</span></td><td class="num"><span class="sy">0</span></td><td><svg class="ic ch" width="20" height="15" viewBox="0 0 512 384"><path fill="#3b82e8" d="M496 320H64V16c0-8.840-7.160-16-16-16H16C7.160 0 0 7.160 0 16v336c0 17.670 14.330 32 32 32h464c8.840 0 16-7.160 16-16v-32c0-8.840-7.160-16-16-16zM464 32H345.940c-21.380 0-32.090 25.850-16.970 40.970l32.400 32.400L288 178.750l-73.370-73.370c-12.500-12.500-32.760-12.500-45.250 0l-68.690 68.690c-6.250 6.250-6.250 16.380 0 22.630l22.620 22.620c6.250 6.250 16.380 6.250 22.630 0L192 173.250l73.370 73.370c12.500 12.500 32.760 12.500 45.250 0l96-96 32.400 32.400c15.120 15.120 40.970 4.410 40.970-16.970V48c.010-8.840-7.150-16-15.990-16z"/></svg></td><td><svg class="ic ch" width="20" height="15" viewBox="0 0 512 384"><path fill="#3b82e8" d="M496 320H64V16c0-8.840-7.160-16-16-16H16C7.160 0 0 7.160 0 16v336c0 17.670 14.330 32 32 32h464c8.840 0 16-7.160 16-16v-32c0-8.840-7.160-16-16-16zM464 32H345.940c-21.380 0-32.090 25.850-16.970 40.970l32.400 32.400L288 178.750l-73.370-73.370c-12.500-12.500-32.760-12.500-45.250 0l-68.690 68.690c-6.250 6.250-6.250 16.380 0 22.630l22.620 22.620c6.250 6.250 16.380 6.250 22.630 0L192 173.250l73.370 73.370c12.500 12.500 32.760 12.500 45.250 0l96-96 32.400 32.400c15.120 15.120 40.970 4.410 40.970-16.970V48c.010-8.840-7.150-16-15.990-16z"/></svg></td><td></td></tr>
</tbody></table></div>
<div id="fx"><div class="fh">操作</div>
<div class="fr" style="height:63px"><span class="b1">设定图文</span><span class="b2">停止</span></div>
<div class="fr" style="height:44px"><span class="b1">设定图文</span><span class="b2">停止</span></div>
<div class="fr" style="height:44px"><span class="b1">设定图文</span><span class="b2">停止</span></div>
<div class="fr" style="height:44px"><span class="b1">设定图文</span><span class="b2">停止</span></div>
<div class="fr" style="height:44px"><span class="b1">设定图文</span><span class="b2">停止</span></div>
<div class="fr" style="height:44px"><span class="b1">设定图文</span><span class="b2">停止</span></div>
<div class="fr" style="height:44px"><span class="b1">设定图文</span><span class="b2">停止</span></div>
<div class="fr" style="height:44px"><span class="b1">设定图文</span><span class="b2">停止</span></div>
<div class="fr" style="height:44px"><span class="b1">设定图文</span><span class="b2">停止</span></div>
<div class="fr" style="height:44px"><span class="b1">设定图文</span><span class="b2">停止</span></div>
</div>
<div id="mos">
<i style="left:378px;top:127px;width:19px;height:23px;background:#eef4fe"></i>
<i style="left:368px;top:137px;width:10px;height:13px;background:#e3edfd"></i>
<i style="left:435px;top:137px;width:19px;height:13px;background:#cfe1fc"></i>
<i style="left:454px;top:137px;width:10px;height:13px;background:#e6effd"></i>
<i style="left:454px;top:127px;width:10px;height:10px;background:#fafcff"></i>
<i style="left:365px;top:184px;width:13px;height:10px;background:#e6effd"></i>
<i style="left:378px;top:184px;width:19px;height:10px;background:#d6e5fc"></i>
<i style="left:435px;top:184px;width:19px;height:10px;background:#d3e3fc"></i>
<i style="left:378px;top:194px;width:19px;height:8px;background:#ecf3fe"></i>
<i style="left:416px;top:194px;width:19px;height:8px;background:#e3edfd"></i>
<i style="left:454px;top:194px;width:19px;height:8px;background:#cfe1fc"></i>
<i style="left:473px;top:194px;width:10px;height:8px;background:#e9f1fe"></i>
<i style="left:378px;top:232px;width:19px;height:12px;background:#e6effd"></i>
<i style="left:397px;top:232px;width:19px;height:12px;background:#dce9fd"></i>
<i style="left:416px;top:232px;width:19px;height:12px;background:#bfd7fb"></i>
<i style="left:435px;top:232px;width:19px;height:12px;background:#f5f9ff"></i>
<i style="left:454px;top:232px;width:19px;height:12px;background:#d3e3fc"></i>
<i style="left:473px;top:232px;width:19px;height:12px;background:#cfe1fc"></i>
<i style="left:492px;top:232px;width:19px;height:12px;background:#bfd7fb"></i>
<i style="left:511px;top:232px;width:19px;height:12px;background:#f0f5fe"></i>
<i style="left:530px;top:232px;width:19px;height:12px;background:#cfe1fc"></i>
<i style="left:549px;top:232px;width:19px;height:12px;background:#e9f1fe"></i>
<i style="left:568px;top:232px;width:19px;height:12px;background:#dce9fd"></i>
<i style="left:587px;top:232px;width:19px;height:12px;background:#d6e5fc"></i>
<i style="left:378px;top:227px;width:19px;height:5px;background:#f0f5fe"></i>
<i style="left:397px;top:227px;width:19px;height:5px;background:#fcfdff"></i>
<i style="left:416px;top:227px;width:19px;height:5px;background:#fcfdff"></i>
<i style="left:435px;top:227px;width:19px;height:5px;background:#fcfdff"></i>
<i style="left:454px;top:227px;width:19px;height:5px;background:#e6effd"></i>
<i style="left:473px;top:227px;width:19px;height:5px;background:#fcfdff"></i>
<i style="left:492px;top:227px;width:19px;height:5px;background:#fcfdff"></i>
<i style="left:511px;top:227px;width:19px;height:5px;background:#fcfdff"></i>
<i style="left:530px;top:227px;width:19px;height:5px;background:#e3ebfb"></i>
<i style="left:549px;top:227px;width:19px;height:5px;background:#fcfdff"></i>
<i style="left:568px;top:227px;width:19px;height:5px;background:#fcfdff"></i>
<i style="left:587px;top:227px;width:19px;height:5px;background:#f0f5fe"></i>
<i style="left:378px;top:270px;width:19px;height:17px;background:#ecf3fe"></i>
<i style="left:397px;top:270px;width:57px;height:17px;background:#dce9fd"></i>
<i style="left:454px;top:270px;width:26px;height:17px;background:#f5f9ff"></i>
<i style="left:378px;top:316px;width:19px;height:11px;background:#bfd9fc"></i>
<i style="left:416px;top:316px;width:19px;height:11px;background:#cbdcfb"></i>
<i style="left:454px;top:316px;width:19px;height:11px;background:#e6f1fe"></i>
<i style="left:435px;top:327px;width:19px;height:8px;background:#ecf3fe"></i>
<i style="left:454px;top:327px;width:19px;height:8px;background:#f2f7fe"></i>
<i style="left:378px;top:359px;width:19px;height:6px;background:#e0eafd"></i>
<i style="left:454px;top:359px;width:19px;height:6px;background:#d6e5fc"></i>
<i style="left:367px;top:365px;width:11px;height:14px;background:#f0f5fe"></i>
<i style="left:378px;top:365px;width:19px;height:14px;background:#bfd9fc"></i>
<i style="left:397px;top:365px;width:38px;height:14px;background:#e3edfd"></i>
<i style="left:473px;top:365px;width:19px;height:14px;background:#f7faff"></i>
<i style="left:365px;top:405px;width:13px;height:17px;background:#bfd9fc"></i>
<i style="left:378px;top:405px;width:19px;height:17px;background:#ecf3fe"></i>
<i style="left:397px;top:405px;width:19px;height:17px;background:#e6effd"></i>
<i style="left:416px;top:405px;width:19px;height:17px;background:#ecf3fe"></i>
<i style="left:435px;top:405px;width:19px;height:17px;background:#eef4fe"></i>
<i style="left:454px;top:405px;width:19px;height:17px;background:#ecf3fe"></i>
<i style="left:473px;top:405px;width:19px;height:17px;background:#cfe1fc"></i>
<i style="left:492px;top:405px;width:19px;height:17px;background:#e3edfd"></i>
<i style="left:511px;top:405px;width:38px;height:17px;background:#d6e5fc"></i>
<i style="left:549px;top:405px;width:14px;height:17px;background:#e3edfd"></i>
<i style="left:378px;top:447px;width:19px;height:13px;background:#b5d2fb"></i>
<i style="left:416px;top:447px;width:19px;height:13px;background:#dce9fd"></i>
<i style="left:454px;top:447px;width:19px;height:19px;background:#e6effd"></i>
<i style="left:397px;top:460px;width:38px;height:6px;background:#f0f5fe"></i>
<i style="left:368px;top:460px;width:10px;height:6px;background:#f5f9ff"></i>
<i style="left:378px;top:492px;width:19px;height:6px;background:#e3edfd"></i>
<i style="left:368px;top:498px;width:10px;height:14px;background:#ecf3fe"></i>
<i style="left:378px;top:498px;width:19px;height:14px;background:#e3edfd"></i>
<i style="left:416px;top:498px;width:19px;height:14px;background:#e3edfd"></i>
<i style="left:365px;top:536px;width:32px;height:19px;background:#f5f8fe"></i>
<i style="left:397px;top:536px;width:19px;height:19px;background:#e3edfd"></i>
<i style="left:416px;top:536px;width:19px;height:19px;background:#b5d2fb"></i>
<i style="left:435px;top:536px;width:19px;height:19px;background:#dce9fd"></i>
<i style="left:454px;top:536px;width:19px;height:19px;background:#d0e0fc"></i>
<i style="left:473px;top:536px;width:19px;height:19px;background:#d3e3fc"></i>
<i style="left:492px;top:536px;width:19px;height:19px;background:#cbdcfb"></i>
<i style="left:511px;top:536px;width:19px;height:19px;background:#b5d2fb"></i>
<i style="left:530px;top:536px;width:19px;height:19px;background:#ecf3fe"></i>
<i style="left:549px;top:536px;width:19px;height:19px;background:#e6effd"></i>
<i style="left:568px;top:536px;width:12px;height:19px;background:#f7faff"></i>
<i style="left:365px;top:555px;width:32px;height:1px;background:#c8c8c8"></i>
<i style="left:511px;top:555px;width:19px;height:1px;background:#c8c8c8"></i>
<i style="left:568px;top:555px;width:12px;height:1px;background:#c8c8c8"></i>
</div>
<div id="sb"><i class="thumb"></i><svg class="al" width="4" height="8" viewBox="0 0 4 8"><path d="M4 0v8L0 4z" fill="#9c9c9c"/></svg><svg class="ar" width="4" height="8" viewBox="0 0 4 8"><path d="M0 0v8l4-4z" fill="#222"/></svg></div>
<div id="ps">10 / 页<svg width="12" height="12" viewBox="0 0 12 12"><path d="M1 3.500l5 5 5-5" fill="none" stroke="#c0c4cc" stroke-width="1.100"/></svg></div>
<div id="pg">
<span class="pb dis" style="left:1420px"><svg width="8" height="10" viewBox="0 0 8 10"><path d="M6 1L2 5l4 4" fill="none" stroke="#dde0e6" stroke-width="1.500"/></svg></span>
<span class="pb on" style="left:1461px"><b>1</b></span>
<span class="pb" style="left:1500px"><b>2</b></span>
<span class="pb" style="left:1540px"><b>3</b></span>
<span class="pb" style="left:1580px"><b>4</b></span>
<span class="pb" style="left:1620px"><svg width="8" height="10" viewBox="0 0 8 10"><path d="M2 1l4 4-4 4" fill="none" stroke="#555" stroke-width="1.300"/></svg></span>
</div>
<!--/CARD--></div>
</body>
</html>
